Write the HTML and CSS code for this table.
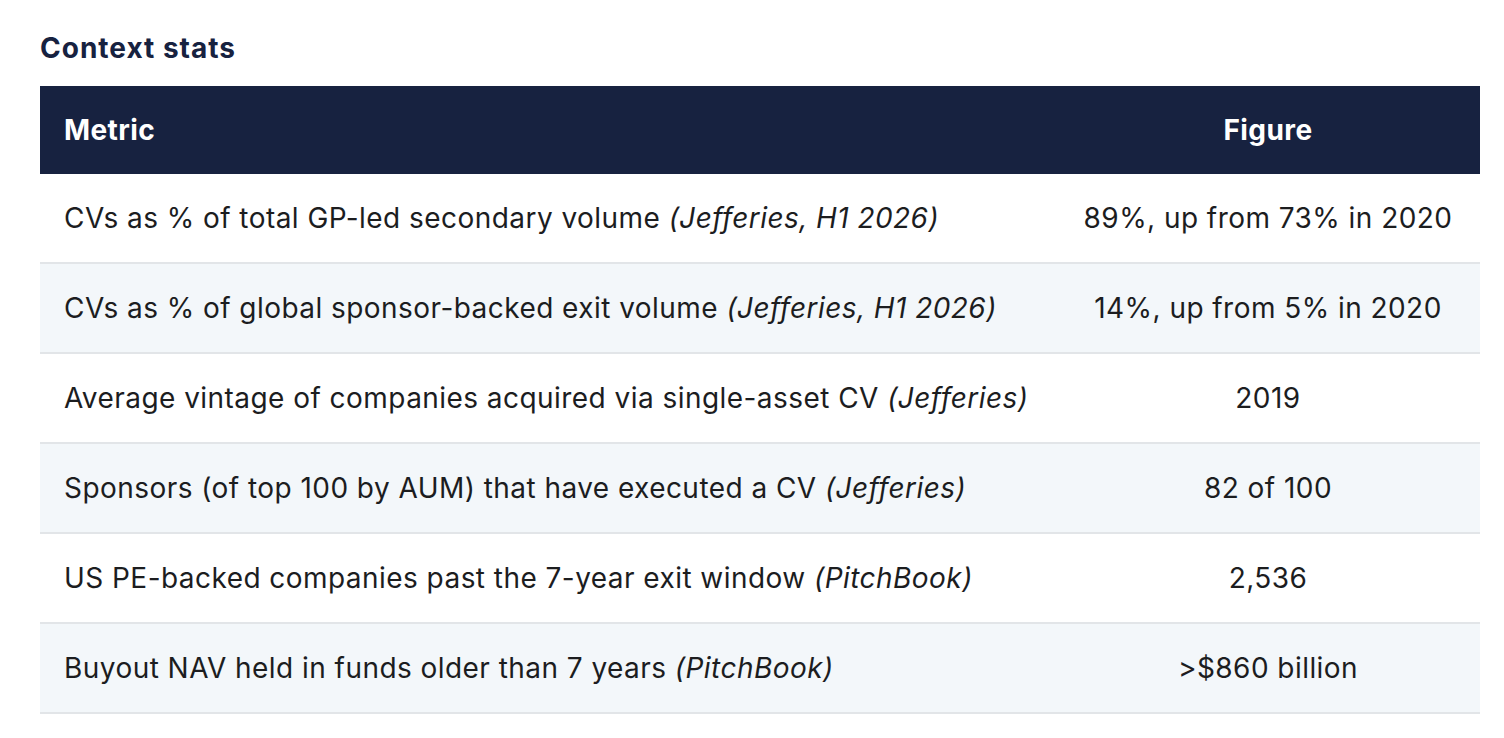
FILE: index.html
```html
<!DOCTYPE html>
<html lang="en">
<head>
<meta charset="utf-8">
<title>Context stats</title>
<link rel="stylesheet" href="styles.css">
</head>
<body>
<section class="stats">
  <h2 class="stats-title">Context stats</h2>
  <table class="stats-table">
    <thead>
      <tr>
        <th class="col-metric">Metric</th>
        <th class="col-figure">Figure</th>
      </tr>
    </thead>
    <tbody>
      <tr>
        <td>CVs as % of total GP-led secondary volume <em>(Jefferies, H1 2026)</em></td>
        <td class="fig">89%, up from 73% in 2020</td>
      </tr>
      <tr>
        <td>CVs as % of global sponsor-backed exit volume <em>(Jefferies, H1 2026)</em></td>
        <td class="fig">14%, up from 5% in 2020</td>
      </tr>
      <tr>
        <td>Average vintage of companies acquired via single-asset CV <em>(Jefferies)</em></td>
        <td class="fig">2019</td>
      </tr>
      <tr>
        <td>Sponsors (of top 100 by AUM) that have executed a CV <em>(Jefferies)</em></td>
        <td class="fig">82 of 100</td>
      </tr>
      <tr>
        <td>US PE-backed companies past the 7-year exit window <em>(PitchBook)</em></td>
        <td class="fig">2,536</td>
      </tr>
      <tr>
        <td>Buyout NAV held in funds older than 7 years <em>(PitchBook)</em></td>
        <td class="fig">&gt;$860 billion</td>
      </tr>
    </tbody>
  </table>
</section>
</body>
</html>
```

FILE: styles.css
```css
html, body {
  margin: 0;
  padding: 0;
  background: #ffffff;
}

body {
  font-family: Inter, "Noto Sans", "Liberation Sans", sans-serif;
  color: #1c1d1f;
}

.stats {
  padding: 28px 24px 0 40px;
}

.stats-title {
  margin: 0 0 18px 0;
  font-size: 28px;
  line-height: 40px;
  font-weight: 700;
  letter-spacing: 1px;
  color: #172240;
}

.stats-table {
  width: 1440px;
  border-collapse: collapse;
  font-size: 28px;
  line-height: 40px;
  letter-spacing: 0.45px;
}

.stats-table th {
  background: #172240;
  color: #ffffff;
  font-weight: 700;
  letter-spacing: 0.4px;
  padding: 24px 24px;
  text-align: left;
}

.stats-table th.col-metric {
  width: 968px;
}

.stats-table th.col-figure {
  text-align: center;
}

.stats-table td {
  padding: 24px 24px;
  border-bottom: 2px solid #e2e5e8;
  font-weight: 400;
}

.stats-table td.fig {
  text-align: center;
}

.stats-table tbody tr:nth-child(even) td {
  background: #f3f7fa;
}

.stats-table em {
  font-style: italic;
}
```
